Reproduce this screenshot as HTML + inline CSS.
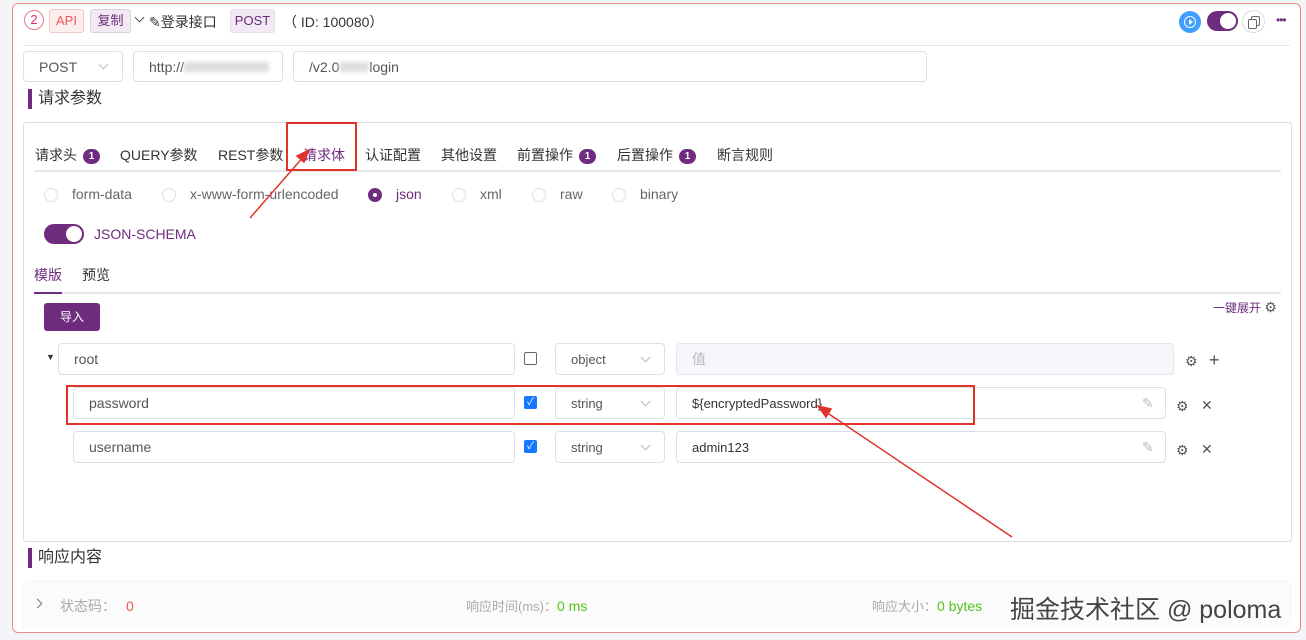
<!DOCTYPE html>
<html><head><meta charset="utf-8"><style>
*{box-sizing:border-box;margin:0;padding:0}
body{width:1306px;height:640px;background:#f3f5f8;font-family:"Liberation Sans","Noto Sans CJK SC",sans-serif;font-size:14px;color:#333;position:relative;overflow:hidden}
.a{position:absolute}
.card{left:12px;top:3px;width:1289px;height:630px;background:#fff;border:1px solid #e88;border-radius:6px}
.tag{position:absolute;height:24px;line-height:22px;font-size:13px;border-radius:3px;text-align:center}
.inp{position:absolute;border:1px solid #dcdfe6;border-radius:4px;background:#fff;font-size:14px;color:#555;padding-left:15px;display:flex;align-items:center}
.t{position:absolute;white-space:nowrap}
.badge{display:inline-block;width:17px;height:15px;border-radius:8px;background:#6f2c7e;color:#fff;font-size:10px;font-weight:bold;text-align:center;line-height:15px;margin-left:6px;vertical-align:middle}
.radio{position:absolute;width:14px;height:14px;border:1px solid #dcdfe6;border-radius:50%}
.chev{position:absolute;width:7px;height:7px;border-right:1px solid #bbb;border-bottom:1px solid #bbb;transform:rotate(45deg)}
.cb{position:absolute;width:13px;height:13px;border-radius:2px}
.sec{position:absolute;border-left:4px solid #6f2c7e;padding-left:6px;font-size:16px;height:20px;line-height:20px;color:#333}
</style></head><body>
<div class="a card"></div>
<div class="a" style="left:24px;top:10px;width:20px;height:20px;border:1.5px solid #e87b7b;border-radius:50%;color:#e26;font-size:13px;text-align:center;line-height:17px">2</div>
<div class="tag" style="left:49px;top:9px;width:35px;background:#fdeeee;border:1px solid #f5c6c6;color:#e55">API</div>
<div class="tag" style="left:90px;top:9px;width:41px;background:#f1eaf4;border:1px solid #ddd0e3;color:#6f2c7e">复制</div>
<div class="chev" style="left:136px;top:14px;border-color:#555"></div>
<div class="t" style="left:149px;top:12px;font-size:14px;color:#333">✎登录接口</div>
<div class="tag" style="left:230px;top:9px;width:45px;background:#f1eaf4;border:1px solid #e5dbea;color:#6f2c7e">POST</div>
<div class="t" style="left:283px;top:12px;font-size:14px">（ ID: 100080）</div>
<div class="a" style="left:1179px;top:11px;width:22px;height:22px;border-radius:50%;background:#409eff"><div class="a" style="left:5px;top:5px;width:12px;height:12px;border:1.5px solid #fff;border-radius:50%"></div><div class="a" style="left:10px;top:8px;border-left:4px solid #fff;border-top:3px solid transparent;border-bottom:3px solid transparent"></div></div>
<div class="a" style="left:1207px;top:11px;width:31px;height:20px;border-radius:10px;background:#6f2c7e"><div class="a" style="left:13px;top:2px;width:16px;height:16px;border-radius:50%;background:#fff"></div></div>
<div class="a" style="left:1242px;top:10px;width:23px;height:23px;border-radius:50%;border:1px solid #ddd"><div class="a" style="left:8px;top:5px;width:9px;height:10px;border:1px solid #666;border-radius:2px"></div><div class="a" style="left:5px;top:8px;width:9px;height:10px;border:1px solid #666;border-radius:2px;background:#fff"></div></div>
<div class="t" style="left:1276px;top:13px;font-size:12px;color:#6f2c7e;letter-spacing:-1px">•••</div>
<div class="a" style="left:23px;top:45px;width:1267px;height:1px;background:#e4e7ed"></div>
<div class="inp" style="left:23px;top:51px;width:100px;height:31px">POST</div><div class="chev" style="left:100px;top:61px"></div>
<div class="inp" style="left:133px;top:51px;width:150px;height:31px">http://<span style="display:inline-block;width:85px;height:10px;background:#ddd;filter:blur(2px)"></span></div>
<div class="inp" style="left:293px;top:51px;width:634px;height:31px">/v2.0<span style="display:inline-block;width:30px;height:10px;background:#ddd;filter:blur(2px)"></span>login</div>
<div class="sec" style="left:28px;top:89px">请求参数</div>
<div class="a" style="left:23px;top:122px;width:1269px;height:420px;border:1px solid #ddd;border-radius:3px"></div>
<div class="t" style="left:35px;top:145px">请求头<span class="badge">1</span></div>
<div class="t" style="left:120px;top:145px">QUERY参数</div>
<div class="t" style="left:218px;top:145px">REST参数</div>
<div class="t" style="left:303px;top:145px;color:#6f2c7e">请求体</div>
<div class="t" style="left:365px;top:145px">认证配置</div>
<div class="t" style="left:441px;top:145px">其他设置</div>
<div class="t" style="left:517px;top:145px">前置操作<span class="badge">1</span></div>
<div class="t" style="left:617px;top:145px">后置操作<span class="badge">1</span></div>
<div class="t" style="left:717px;top:145px">断言规则</div>
<div class="a" style="left:34px;top:170px;width:1247px;height:2px;background:#e4e7ed"></div>
<div class="a" style="left:303px;top:169px;width:42px;height:2px;background:#6f2c7e"></div>
<div class="a" style="left:286px;top:122px;width:71px;height:49px;border:2px solid #e0332a"></div>
<div class="radio" style="left:44px;top:188px"></div><div class="t" style="left:72px;top:186px;color:#666">form-data</div>
<div class="radio" style="left:162px;top:188px"></div><div class="t" style="left:190px;top:186px;color:#666">x-www-form-urlencoded</div>
<div class="radio" style="left:368px;top:188px;background:#6f2c7e;border-color:#6f2c7e"><div class="a" style="left:4px;top:4px;width:4px;height:4px;border-radius:50%;background:#fff"></div></div><div class="t" style="left:396px;top:186px;color:#6f2c7e">json</div>
<div class="radio" style="left:452px;top:188px"></div><div class="t" style="left:480px;top:186px;color:#666">xml</div>
<div class="radio" style="left:532px;top:188px"></div><div class="t" style="left:560px;top:186px;color:#666">raw</div>
<div class="radio" style="left:612px;top:188px"></div><div class="t" style="left:640px;top:186px;color:#666">binary</div>
<div class="a" style="left:44px;top:224px;width:40px;height:20px;border-radius:10px;background:#6f2c7e"><div class="a" style="left:22px;top:2px;width:16px;height:16px;border-radius:50%;background:#fff"></div></div>
<div class="t" style="left:94px;top:226px;color:#6f2c7e">JSON-SCHEMA</div>
<div class="t" style="left:34px;top:265px;color:#6f2c7e">模版</div>
<div class="t" style="left:82px;top:265px">预览</div>
<div class="a" style="left:34px;top:292px;width:1247px;height:2px;background:#e4e7ed"></div>
<div class="a" style="left:34px;top:292px;width:28px;height:2px;background:#6f2c7e"></div>
<div class="a" style="left:44px;top:303px;width:56px;height:28px;background:#6f2c7e;border-radius:3px;color:#fff;font-size:12px;text-align:center;line-height:28px">导入</div>
<div class="t" style="left:1213px;top:299px;font-size:12px;color:#6f2c7e">一键展开 <span style="color:#555;font-size:14px">⚙</span></div>
<div class="t" style="left:46px;top:352px;font-size:9px">▼</div>
<div class="inp" style="left:58px;top:343px;width:457px;height:32px">root</div>
<div class="cb" style="left:524px;top:352px;border:1px solid #666"></div>
<div class="inp" style="left:555px;top:343px;width:110px;height:32px;font-size:13px">object</div><div class="chev" style="left:642px;top:354px"></div>
<div class="inp" style="left:676px;top:343px;width:498px;height:32px;background:#f5f7fa;border-color:#e4e7ed;color:#bbb">值</div>
<div class="t" style="left:1185px;top:353px;color:#555">⚙</div><div class="t" style="left:1209px;top:350px;font-size:18px;color:#555">+</div>
<div class="inp" style="left:73px;top:387px;width:442px;height:32px">password</div>
<div class="cb" style="left:524px;top:396px;background:#1677ff;color:#fff;font-size:10px;text-align:center;line-height:13px">✓</div>
<div class="inp" style="left:555px;top:387px;width:110px;height:32px;font-size:13px">string</div><div class="chev" style="left:642px;top:398px"></div>
<div class="inp" style="left:676px;top:387px;width:490px;height:32px;font-size:13px;color:#333">${encryptedPassword}</div>
<div class="t" style="left:1142px;top:395px;color:#bbb">✎</div>
<div class="t" style="left:1176px;top:398px;color:#555">⚙</div><div class="t" style="left:1201px;top:397px;color:#555">✕</div>
<div class="inp" style="left:73px;top:431px;width:442px;height:32px">username</div>
<div class="cb" style="left:524px;top:440px;background:#1677ff;color:#fff;font-size:10px;text-align:center;line-height:13px">✓</div>
<div class="inp" style="left:555px;top:431px;width:110px;height:32px;font-size:13px">string</div><div class="chev" style="left:642px;top:442px"></div>
<div class="inp" style="left:676px;top:431px;width:490px;height:32px;font-size:13px;color:#333">admin123</div>
<div class="t" style="left:1142px;top:439px;color:#bbb">✎</div>
<div class="t" style="left:1176px;top:442px;color:#555">⚙</div><div class="t" style="left:1201px;top:441px;color:#555">✕</div>
<div class="a" style="left:66px;top:385px;width:909px;height:40px;border:2px solid #e0332a"></div>
<svg class="a" style="left:0;top:0" width="1306" height="640"><g stroke="#e0332a" stroke-width="1.5" fill="#e0332a"><line x1="250" y1="218" x2="305" y2="155"/><polygon points="309,150 297,156 304,162"/><line x1="1012" y1="537" x2="823" y2="410"/><polygon points="818,406 826,417 831,409"/></g></svg>
<div class="sec" style="left:28px;top:548px">响应内容</div>
<div class="a" style="left:24px;top:582px;width:1266px;height:43px;background:#fbfbfb;border-radius:4px;box-shadow:0 0 3px #e8e8e8"></div>
<div class="chev" style="left:34px;top:600px;transform:rotate(-45deg);border-color:#777"></div>
<div class="t" style="left:60px;top:596px;color:#aaa">状态码：<span style="color:#e55;margin-left:10px">0</span></div>
<div class="t" style="left:466px;top:596px;color:#aaa;font-size:13px">响应时间(ms)：<span style="color:#52c41a;font-size:14px">0 ms</span></div>
<div class="t" style="left:872px;top:596px;color:#aaa;font-size:13px">响应大小：<span style="color:#52c41a;font-size:14px">0 bytes</span></div>
<div class="t" style="left:1010px;top:590px;font-size:25px;color:#444;text-shadow:1px 1px 1px #fff">掘金技术社区 @ poloma</div>
</body></html>
